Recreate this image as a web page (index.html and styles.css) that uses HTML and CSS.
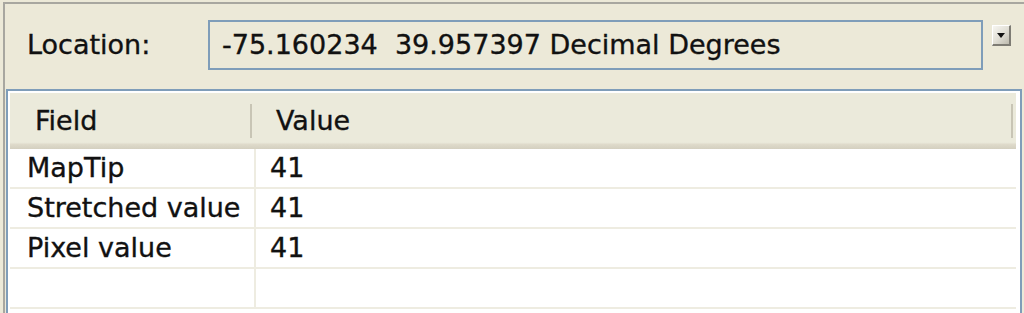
FILE: index.html
```html
<!DOCTYPE html>
<html lang="en">

<head>
    <meta charset="UTF-8">
    <meta name="viewport" content="width=device-width, initial-scale=1.0">
    <title>Identify</title>
    <link rel="stylesheet" href="styles.css">
</head>

<body>
    <div class="window">
        <div class="locationBar">
            <span class="locLabel">Location:</span>
            <div class="locBox">-75.160234&nbsp; 39.957397 Decimal Degrees</div>
            <div class="dropBtn">
                <svg width="10" height="7" viewBox="0 0 10 7">
                    <polygon points="1,1 9,1 5,6" fill="#111" />
                </svg>
            </div>
        </div>

        <div class="gridPanel">
            <div class="gridTable">
                <div class="gridHeader">
                    <div class="hcell hField">Field</div>
                    <div class="hcell hValue">Value</div>
                </div>
                <div class="gridRow">
                    <div class="cell cField">MapTip</div>
                    <div class="cell cValue">41</div>
                </div>
                <div class="gridRow">
                    <div class="cell cField">Stretched value</div>
                    <div class="cell cValue">41</div>
                </div>
                <div class="gridRow">
                    <div class="cell cField">Pixel value</div>
                    <div class="cell cValue">41</div>
                </div>
                <div class="gridRow">
                    <div class="cell cField"></div>
                    <div class="cell cValue"></div>
                </div>
            </div>
        </div>
    </div>
</body>

</html>
```

FILE: styles.css
```css
*,
*::after,
*::before {
    box-sizing: border-box;
}

html,
body {
    margin: 0;
    height: 313px;
    overflow: hidden;
    background-color: #ECE9D8;
}

body {
    font-family: 'DejaVu Sans', Verdana, sans-serif;
    font-size: 27px;
    color: #111111;
    -webkit-text-stroke: 0.35px #111111;
}

.window {
    margin: 2px 0 0 3px;
    border-top: 2px solid #A8A7A0;
    border-left: 2px solid #A8A7A0;
    height: 311px;
    display: flex;
    flex-direction: column;
}

/* location row */
.locationBar {
    height: 85px;
    flex-shrink: 0;
    padding-top: 16px;
    display: flex;
    align-items: flex-start;
}

.locLabel {
    width: 203px;
    padding-left: 22px;
    line-height: 50px;
}

.locBox {
    width: 775px;
    height: 50px;
    border: 2px solid #7F9DB9;
    padding-left: 12px;
    line-height: 46px;
    white-space: pre;
    background-color: #ECE9D8;
}

.dropBtn {
    margin: 5px 0 0 9px;
    width: 19px;
    height: 21px;
    background: linear-gradient(135deg, #F7F6F1 0%, #E2E0D7 50%, #BDBAAE 100%);
    border-top: 1px solid #FFFFFF;
    border-left: 1px solid #FFFFFF;
    border-right: 2px solid #7E7C74;
    border-bottom: 2px solid #7E7C74;
    display: flex;
    align-items: center;
    justify-content: center;
}

/* grid */
.gridPanel {
    flex: 1;
    margin-left: 1px;
    width: 1016px;
    border: 2px solid #7F9DB9;
    border-bottom: none;
    padding: 2px 2px 0 2px;
    background-color: #FFFFFF;
    overflow: hidden;
}

.gridTable {
    margin-right: 2px;
}

.gridHeader {
    height: 56px;
    display: flex;
    align-items: center;
    background: linear-gradient(to bottom, #EBEADB 0%, #EBEADB 88%, #DEDACA 92%, #D3CFBF 100%);
}

.hcell {
    height: 34px;
    line-height: 34px;
    border-right: 2px solid #C8C5B5;
}

.hField {
    width: 242px;
    padding-left: 25px;
}

.hValue {
    flex: 1;
    margin-right: 3px;
    padding-left: 24px;
}

.gridRow {
    height: 40px;
    display: grid;
    grid-template-columns: 246px 1fr;
    border-bottom: 2px solid #EEECE1;
}

.cell {
    line-height: 38px;
    white-space: nowrap;
}

.cField {
    padding-left: 17px;
    border-right: 2px solid #EEECE1;
}

.cValue {
    padding-left: 14px;
}
```
